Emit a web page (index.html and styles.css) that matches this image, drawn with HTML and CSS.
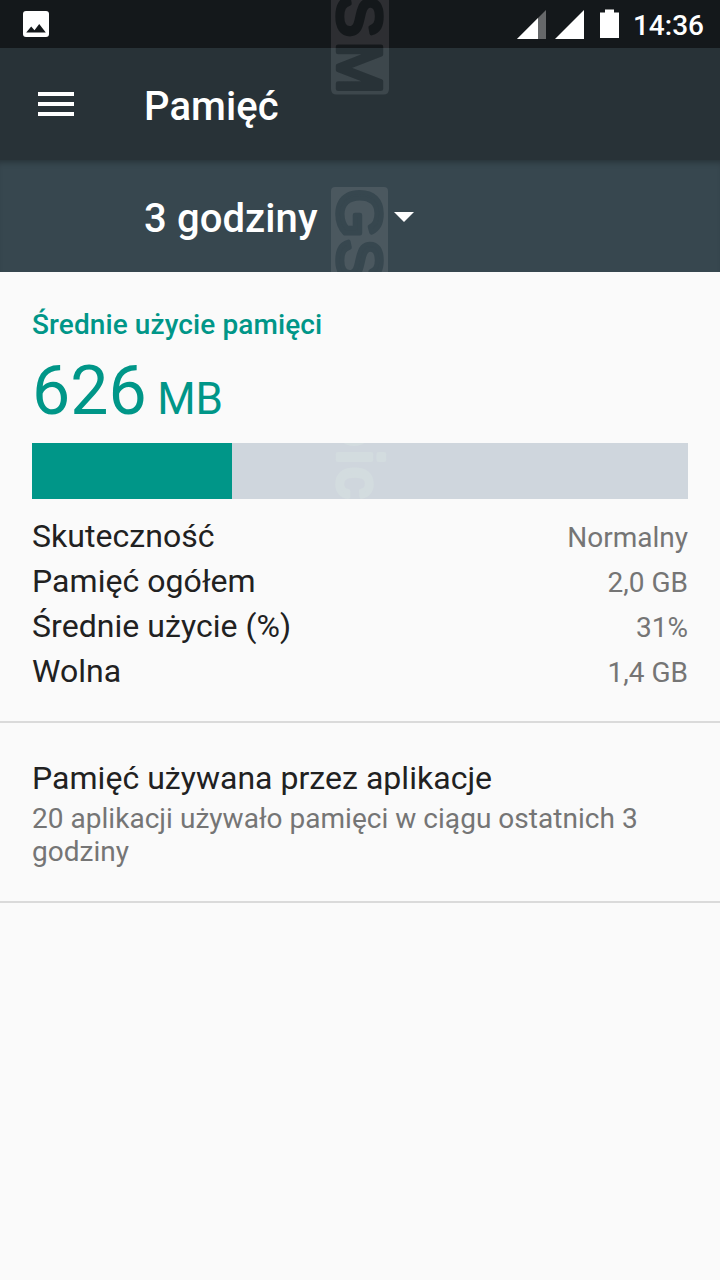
FILE: index.html
```html
<!DOCTYPE html>
<html lang="pl">
<head>
<meta charset="utf-8">
<title>Pamięć</title>
<link rel="stylesheet" href="styles.css">
</head>
<body>
<div class="screen">
  <header class="status">
    <svg class="status-photo" width="26" height="26" viewBox="0 0 26 26"><rect width="26" height="26" rx="3" fill="#fff"/><path d="M3.200 21.500L8.200 15.400L11.500 19.300L16.200 13L22.800 21.500Z" fill="#14181b"/></svg>
    <svg class="status-signals" width="104" height="30" viewBox="0 0 104 30"><path d="M0 29L29 0V29Z" fill="#66686a"/><path d="M0 29L21 8V29Z" fill="#fff"/><path d="M38 29L67 0V29Z" fill="#fff"/><path d="M88 -.5H97V2.500H102V28H83V2.500H88Z" fill="#fff"/></svg>
    <span class="clock">14:36</span>
  </header>
  <div class="toolbar">
    <svg class="menu" width="36" height="24" viewBox="0 0 36 24"><path d="M0 0H36V4H0ZM0 10H36V14H0ZM0 20H36V24H0Z" fill="#fff"/></svg>
    <h1 class="title">Pamięć</h1>
  </div>
  <div class="period">
    <span class="period-label">3 godziny</span>
    <svg class="caret" width="20" height="10" viewBox="0 0 20 10"><path d="M0 0H20L10 10Z" fill="#fff"/></svg>
  </div>
  <main>
    <section class="usage">
      <h2 class="usage-label">Średnie użycie pamięci</h2>
      <div class="usage-value">626<span class="unit"> MB</span></div>
      <div class="bar"><div class="bar-fill" style="width:200px"></div></div>
      <dl class="stats">
        <div class="stat"><dt>Skuteczność</dt><dd>Normalny</dd></div>
        <div class="stat"><dt>Pamięć ogółem</dt><dd>2,0 GB</dd></div>
        <div class="stat"><dt>Średnie użycie (%)</dt><dd>31%</dd></div>
        <div class="stat"><dt>Wolna</dt><dd>1,4 GB</dd></div>
      </dl>
    </section>
    <section class="apps">
      <h2 class="apps-title">Pamięć używana przez aplikacje</h2>
      <p class="apps-text">20 aplikacji używało pamięci w ciągu ostatnich 3 godziny</p>
    </section>
  </main>
  <svg class="watermark" width="70" height="500" viewBox="325 0 70 500">
    <defs>
      <linearGradient id="ink" gradientUnits="userSpaceOnUse" x1="0" y1="0" x2="96" y2="0"><stop offset=".5" stop-color="#14181b"/><stop offset=".5" stop-color="#283237"/></linearGradient>
      <clipPath id="period-clip"><rect x="325" y="160" width="70" height="112"/></clipPath>
      <clipPath id="bar-clip"><rect x="325" y="443" width="70" height="56"/></clipPath>
    </defs>
    <path d="M331 0H389V48H331Z" fill="#2d2e32"/>
    <path d="M331 48H389V89Q389 94.500 383.500 94.500H336.500Q331 94.500 331 89Z" fill="#3d474c"/>
    <g transform="translate(338.200 0) rotate(90)"><text class="wm wm-top" x="-5 41.500" y="0">SM</text></g>
    <g clip-path="url(#period-clip)">
      <rect x="331" y="187" width="57" height="110" rx="4" fill="#4b585f"/>
      <g transform="translate(338 0) rotate(90)"><text class="wm wm-period" x="189 239" y="0">GS</text></g>
    </g>
    <g clip-path="url(#bar-clip)">
      <ellipse cx="354" cy="430" rx="18" ry="16" fill="#d3dcdf"/>
      <g transform="translate(338.200 0) rotate(90)"><text class="wm wm-bar" x="450 467" y="0">ic</text></g>
    </g>
  </svg>
</div>
</body>
</html>
```
FILE: styles.css
```css
* { box-sizing: border-box; }
body { margin: 0; background: #fafafa; font-family: Roboto, sans-serif; color: #212121; }
h1, h2, p, dl, dt, dd { margin: 0; font-weight: 400; }
svg { display: block; flex: none; }
.screen { position: relative; width: 720px; height: 1280px; overflow: hidden; background: #fafafa; }
.status { height: 48px; display: flex; align-items: flex-start; padding: 10px 16px 0 23px; background: #14181b; color: #fff; }
.status-photo { margin-top: 1px; }
.status-signals { margin-left: auto; margin-right: 12px; overflow: visible; }
.clock { padding-top: 1px; font-size: 28px; font-weight: 500; line-height: 30px; }
.toolbar { height: 112px; display: flex; align-items: center; padding: 6px 38px 0; background: #283237; color: #fff; }
.menu { margin-bottom: 6px; }
.title { margin-left: 70px; font-size: 40px; font-weight: 500; line-height: 48px; letter-spacing: .1px; }
.period { height: 112px; display: flex; align-items: center; padding: 6px 0 0 144px; background: #37474f; color: #fff; box-shadow: inset 0 6px 6px -4px rgba(0, 0, 0, .3); }
.period-label { width: 250px; font-size: 40px; font-weight: 500; line-height: 48px; letter-spacing: .1px; }
.caret { margin-bottom: 4px; }
.usage { height: 451px; padding: 36px 32px 0; border-bottom: 2px solid #dadada; }
.usage-label { font-size: 28px; font-weight: 500; line-height: 33px; letter-spacing: .1px; color: #009688; }
.usage-value { height: 102px; padding-top: 10px; font-size: 68px; line-height: 80px; color: #009688; white-space: pre; }
.unit { font-size: 44px; letter-spacing: -.3px; }
.bar { height: 56px; background: #cfd6dd; }
.bar-fill { height: 56px; background: #009688; }
.stats { padding-top: 15px; }
.stat { height: 45px; display: flex; justify-content: space-between; align-items: baseline; line-height: 45px; font-size: 32px; letter-spacing: .05px; }
.stat dd { font-size: 28px; color: #757575; letter-spacing: 0; }
.apps { height: 180px; padding: 34px 32px 0; border-bottom: 2px solid #dadada; }
.apps-title { font-size: 32px; line-height: 42px; letter-spacing: .03px; }
.apps-text { padding-top: 3px; font-size: 28px; line-height: 33px; letter-spacing: .03px; color: #757575; }
.watermark { position: absolute; left: 325px; top: 0; }
.wm { font-family: "Liberation Sans", Arial, sans-serif; font-size: 63px; stroke-width: 4.5px; stroke-linejoin: round; }
.wm-top { fill: url(#ink); stroke: url(#ink); }
.wm-period { fill: #37474f; stroke: #37474f; }
.wm-bar { fill: #d3dcdf; stroke: #d3dcdf; }
```
